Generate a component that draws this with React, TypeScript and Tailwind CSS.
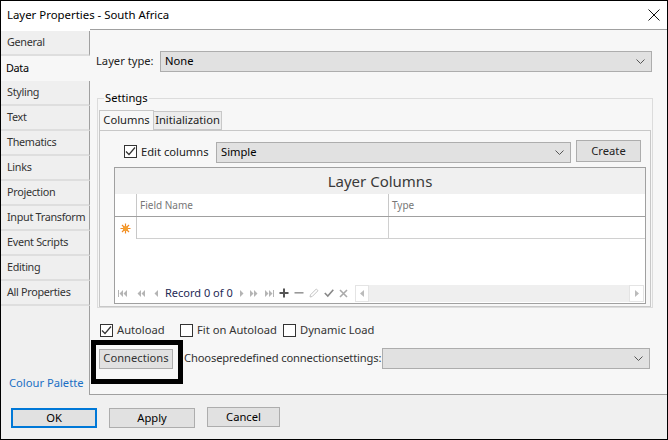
import React from "react";

const tabs = [
  "General",
  "Data",
  "Styling",
  "Text",
  "Thematics",
  "Links",
  "Projection",
  "Input Transform",
  "Event Scripts",
  "Editing",
  "All Properties",
];

function Chevron() {
  return (
    <svg width="9" height="5" viewBox="0 0 9 5" className="shrink-0">
      <path d="M0.5 0.5 L4.5 4.5 L8.5 0.5" fill="none" stroke="#555" strokeWidth="1" />
    </svg>
  );
}

function Check({ checked }: { checked?: boolean }) {
  return (
    <span className="flex h-[13px] w-[13px] shrink-0 items-center justify-center border border-[#333] bg-white">
      {checked && (
        <svg width="11" height="11" viewBox="0 0 11 11">
          <path d="M1 5.5 L4 8.5 L10 1.5" fill="none" stroke="#333" strokeWidth="1.2" />
        </svg>
      )}
    </span>
  );
}

function Select({ value, className }: { value?: string; className: string }) {
  return (
    <div className={`flex h-[21px] items-center justify-between border border-[#adadad] bg-[#e1e1e1] pl-[4px] pr-[6px] text-black ${className}`}>
      <span>{value}</span>
      <Chevron />
    </div>
  );
}

function NavIcon({ d }: { d: string }) {
  return (
    <svg width="10" height="9" viewBox="0 0 10 9" className="shrink-0">
      <path d={d} fill="#b4b4b4" />
    </svg>
  );
}

export default function App() {
  return (
    <div
      className="flex h-[440px] w-[668px] flex-col overflow-hidden border border-black bg-[#f0f0f0] text-[11.2px] text-[#222]"
      style={{ fontFamily: "'Noto Sans', 'Open Sans', sans-serif" }}
    >
      {/* title bar */}
      <div className="flex h-[28px] shrink-0 items-center justify-between bg-white pl-[6px] pr-[7px]">
        <span className="text-[11.4px] text-black">Layer Properties - South Africa</span>
        <svg width="12" height="12" viewBox="0 0 12 12">
          <path d="M0.5 0.5 L11.5 11.5 M11.5 0.5 L0.5 11.5" stroke="#111" strokeWidth="1" />
        </svg>
      </div>

      <div className="flex h-[366px] shrink-0">
        {/* left tab column */}
        <div className="flex w-[89px] shrink-0 flex-col bg-white pt-[2px] text-[10.8px] tracking-[-0.3px]">
          {tabs.map((t) =>
            t === "Data" ? (
              <div key={t} className="flex h-[25px] shrink-0 items-center bg-[#f7f7f7] pl-[5px] text-black">
                {t}
              </div>
            ) : (
              <div
                key={t}
                className="flex h-[25px] shrink-0 items-center whitespace-nowrap border-r border-b-2 border-r-[#a0a0a0] border-b-[#dedede] bg-[#efefef] pl-[6px] text-[#333]"
              >
                {t}
              </div>
            )
          )}
          <div className="flex flex-1 items-end border-r border-[#a0a0a0] bg-[#f0f0f0] pb-[3px] pl-[8px] text-[11.2px] tracking-normal">
            <span className="text-[#1a6fc4]">Colour Palette</span>
          </div>
        </div>

        {/* content panel */}
        <div className="flex flex-1 flex-col border-t border-b border-[#a0a0a0] bg-[#f7f7f7]">
          <div className="mt-[21px] flex items-center pl-[6px] pr-[15px]">
            <span className="w-[64px]">Layer type:</span>
            <Select value="None" className="flex-1" />
          </div>

          <fieldset className="mx-[7px] mr-[14px] mt-[18px] h-[218px] border border-[#dcdcdc] px-[1px]">
            <legend className="ml-[5px] px-[1px] leading-[16px] text-black">Settings</legend>
            <div className="mt-[4px] flex">
              <div className="z-10 -mb-px flex h-[20px] w-[55px] items-center justify-center border border-b-0 border-[#c8c8c8] bg-[#f7f7f7]">
                Columns
              </div>
              <div className="mt-[1px] flex h-[19px] w-[68px] items-center justify-center border border-l-0 border-[#c8c8c8] bg-[#ececec]">
                Initialization
              </div>
            </div>
            <div className="flex h-[177px] flex-col border border-[#c8c8c8] pl-[14px] pr-[4px]">
              <div className="mt-[10px] flex items-center">
                <div className="ml-[10px] flex w-[92px] items-center gap-[4px]">
                  <Check checked />
                  <span>Edit columns</span>
                </div>
                <Select value="Simple" className="w-[355px]" />
                <div className="ml-[5px] flex h-[22px] w-[65px] -translate-y-px items-center justify-center border border-[#adadad] bg-[#e1e1e1]">
                  Create
                </div>
              </div>

              {/* grid */}
              <div className="mt-[4px] flex h-[137px] flex-col border border-[#a0a0a0] bg-white">
                <div className="flex h-[26px] items-center justify-center bg-[#f0f0f0] text-[15px] text-[#3a3a3a]">
                  Layer Columns
                </div>
                <div className="flex h-[23px] border-b border-[#a0a0a0] text-[10px] text-[#777]">
                  <div className="w-[22px] border-r border-[#c8c8c8]" />
                  <div className="flex w-[252px] items-center border-r border-[#c8c8c8] pl-[3px]">Field Name</div>
                  <div className="flex flex-1 items-center pl-[3px]">Type</div>
                </div>
                <div className="flex h-[22px]">
                  <div className="flex w-[22px] items-center justify-center border-r border-[#c8c8c8]">
                    <svg width="11" height="11" viewBox="0 0 11 11">
                      <g stroke="#f08a24" strokeWidth="1.2">
                        <path d="M5.5 0.5 V10.5 M0.5 5.5 H10.5 M2 2 L9 9 M9 2 L2 9" />
                      </g>
                      <circle cx="5.5" cy="5.5" r="2.6" fill="#f5a030" />
                    </svg>
                  </div>
                  <div className="w-[252px] border-r border-b border-[#d0d0d0]" />
                  <div className="flex-1 border-b border-[#d0d0d0]" />
                </div>
                <div className="flex-1" />
                <div className="mb-[1px] flex h-[18px] items-center">
                  <div className="flex items-center gap-[8px] pl-[3px]">
                    <NavIcon d="M0 1 H1 V8 H0 Z M5 1 L1.5 4.5 L5 8 Z M9 1 L5.5 4.5 L9 8 Z" />
                    <NavIcon d="M5 1 L1.5 4.5 L5 8 Z M9 1 L5.5 4.5 L9 8 Z" />
                    <svg width="5" height="9" viewBox="0 0 5 9"><path d="M4 1 L0.5 4.5 L4 8 Z" fill="#b4b4b4" /></svg>
                  </div>
                  <span className="ml-[6px] w-[70px] text-[11px] text-[#1e2a55]">Record 0 of 0</span>
                  <div className="ml-[4px] flex items-center gap-[5px]">
                    <svg width="5" height="9" viewBox="0 0 5 9"><path d="M1 1 L4.5 4.5 L1 8 Z" fill="#b4b4b4" /></svg>
                    <NavIcon d="M1 1 L4.5 4.5 L1 8 Z M5 1 L8.5 4.5 L5 8 Z" />
                    <NavIcon d="M1 1 L4.5 4.5 L1 8 Z M5 1 L8.5 4.5 L5 8 Z M9 1 H10 V8 H9 Z" />
                    <svg width="10" height="10" viewBox="0 0 10 10"><path d="M4 0.5 H6 V4 H9.5 V6 H6 V9.5 H4 V6 H0.5 V4 H4 Z" fill="#555" /></svg>
                    <svg width="10" height="10" viewBox="0 0 10 10"><path d="M0.5 4 H9.5 V5.6 H0.5 Z" fill="#999" /></svg>
                    <svg width="10" height="10" viewBox="0 0 10 10"><path d="M1 9 L1.5 6.8 L7.3 1 L9 2.7 L3.2 8.5 Z" fill="none" stroke="#c4c4c4" strokeWidth="1" /></svg>
                    <svg width="10" height="10" viewBox="0 0 10 10"><path d="M0.8 5 L3.8 8 L9.3 1.8" fill="none" stroke="#888" strokeWidth="1.6" /></svg>
                    <svg width="9" height="9" viewBox="0 0 9 9"><path d="M1 1 L8 8 M8 1 L1 8" stroke="#aaa" strokeWidth="1.6" /></svg>
                  </div>
                  <div className="ml-[7px] mr-[1px] flex h-[17px] flex-1 items-center justify-between bg-[#efefef]">
                    <div className="flex h-[17px] w-[14px] items-center justify-center border border-[#e4e4e4] bg-white">
                      <svg width="4" height="7" viewBox="0 0 4 7"><path d="M4 0 L0 3.5 L4 7 Z" fill="#bbb" /></svg>
                    </div>
                    <div className="flex h-[17px] w-[15px] items-center justify-center border border-[#e4e4e4] bg-white">
                      <svg width="4" height="7" viewBox="0 0 4 7"><path d="M0 0 L4 3.5 L0 7 Z" fill="#bbb" /></svg>
                    </div>
                  </div>
                </div>
              </div>
            </div>
          </fieldset>

          <div className="mt-[16px] flex h-[13px] items-center pl-[10px] text-[#333]">
            <Check checked />
            <span className="ml-[4px] w-[63px]">Autoload</span>
            <Check />
            <span className="ml-[4px] w-[86px]">Fit on Autoload</span>
            <Check />
            <span className="ml-[4px]">Dynamic Load</span>
          </div>

          <div className="mt-[11px] flex items-center pl-[9px] pr-[17px]">
            <div className="relative flex h-[20px] w-[74px] items-center justify-center border border-[#adadad] bg-[#e1e1e1] text-[#333]">
              Connections
              {/* highlight annotation */}
              <div className="pointer-events-none absolute -left-[9px] -top-[10px] h-[44px] w-[92px] border-[5px] border-black" />
            </div>
            <span className="ml-[11px] w-[198px] whitespace-nowrap tracking-[-0.15px] text-[#333]">Choosepredefined connectionsettings:</span>
            <Select className="flex-1" />
          </div>
        </div>
      </div>

      {/* footer */}
      <div className="flex flex-1 items-start gap-[12px] pl-[10px] pt-[13px] text-black">
        <div className="flex h-[20px] w-[86px] items-center justify-center border-2 border-[#0078d7] bg-[#e1e1e1]">OK</div>
        <div className="flex h-[20px] w-[86px] items-center justify-center border border-[#adadad] bg-[#e1e1e1]">Apply</div>
        <div className="-mt-px flex h-[20px] w-[73px] items-center justify-center border border-[#adadad] bg-[#e1e1e1]">Cancel</div>
      </div>
    </div>
  );
}
